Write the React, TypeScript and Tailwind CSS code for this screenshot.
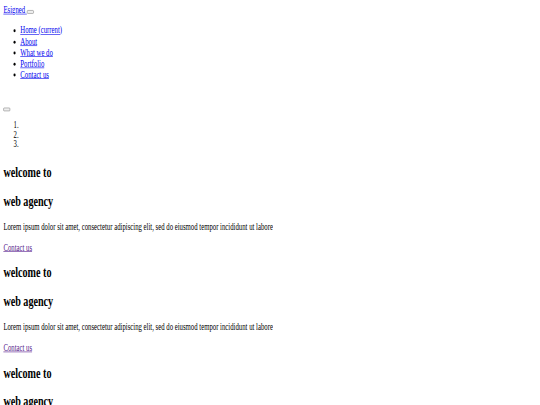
import React from 'react';

// The reference is an unstyled page shot at 1280 wide and squeezed into 540x405,
// so the page is laid out at its natural size and scaled down on one wrapper.

const navLinks = ['Home (current)', 'About', 'What we do', 'Portfolio', 'Contact us'];

const RawButton: React.FC = () => (
  <button
    type="button"
    className="inline-block w-[16px] h-[6px] border border-[#767676] bg-[#efefef] rounded-[2px] align-baseline"
  />
);

const Slide: React.FC = () => (
  <div>
    <h2 className="text-[24px] leading-[27.6px] font-bold my-[19.92px]">welcome to</h2>
    <h2 className="text-[24px] leading-[27.6px] font-bold my-[19.92px]">web agency</h2>
    <p className="my-4">
      Lorem ipsum dolor sit amet, consectetur adipiscing elit, sed do eiusmod tempor incididunt ut labore
    </p>
    <p className="my-4">
      <a href="#" className="text-[#551a8b] underline">
        Contact us
      </a>
    </p>
  </div>
);

export default function App() {
  return (
    <div className="w-[540px] h-[405px] overflow-hidden bg-white">
      <div
        className="w-[1280px] origin-top-left scale-x-[0.4219] scale-y-[0.598] p-2 text-black text-[16px] leading-[18.4px]"
        style={{ fontFamily: '"Liberation Serif", "Times New Roman", serif' }}
      >
        <nav>
          <div>
            <a href="#" className="text-[#0000ee] underline">
              Esigned{' '}
            </a>
            <RawButton />
          </div>
          <ul className="list-disc pl-10 my-4">
            {navLinks.map((label) => (
              <li key={label}>
                <a href="#" className="text-[#0000ee] underline">
                  {label}
                </a>
              </li>
            ))}
          </ul>
        </nav>

        <section className="pt-[21px]">
          <div>
            <RawButton />
          </div>
          <ol className="list-decimal pl-10 mt-[11px] mb-[26px] leading-[16.2px]">
            <li>&nbsp;</li>
            <li>&nbsp;</li>
            <li>&nbsp;</li>
          </ol>
          <Slide />
          <Slide />
          <Slide />
        </section>
      </div>
    </div>
  );
}
